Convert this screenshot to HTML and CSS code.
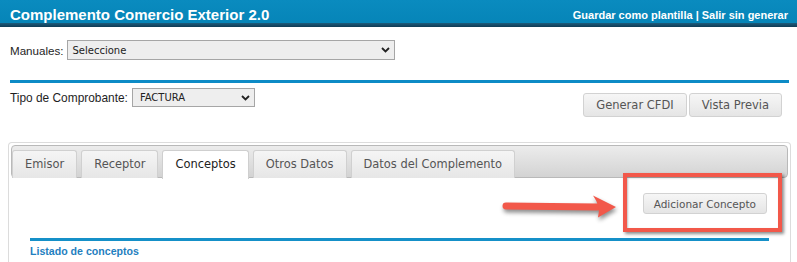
FILE: index.html
```html
<!DOCTYPE html>
<html lang="es">
<head>
<meta charset="utf-8">
<title>Complemento Comercio Exterior 2.0</title>
<link rel="stylesheet" href="styles.css">
</head>
<body>
<header class="topbar">
  <h1 class="topbar-title">Complemento Comercio Exterior 2.0</h1>
  <nav class="topbar-links"><a href="#">Guardar como plantilla</a> | <a href="#">Salir sin generar</a></nav>
</header>
<main class="page">
  <div class="field-row field-row--manuales">
    <label class="field-label">Manuales:</label>
    <div class="select select--wide">
      <span>Seleccione</span>
      <svg class="select-chevron" width="9" height="6" viewBox="0 0 9 6"><path d="M1 1l3.5 3.5L8 1" /></svg>
    </div>
  </div>
  <hr class="rule">
  <div class="toolbar">
    <div class="field-row">
      <label class="field-label field-label--wide">Tipo de Comprobante:</label>
      <div class="select select--narrow">
        <span>FACTURA</span>
        <svg class="select-chevron" width="9" height="6" viewBox="0 0 9 6"><path d="M1 1l3.5 3.5L8 1" /></svg>
      </div>
    </div>
    <div class="toolbar-actions">
      <button class="btn">Generar CFDI</button>
      <button class="btn">Vista Previa</button>
    </div>
  </div>
  <section class="tabs">
    <ul class="tab-list">
      <li class="tab">Emisor</li>
      <li class="tab">Receptor</li>
      <li class="tab tab--active">Conceptos</li>
      <li class="tab">Otros Datos</li>
      <li class="tab">Datos del Complemento</li>
    </ul>
    <div class="tab-panel">
      <div class="panel-actions">
        <button class="btn btn--small">Adicionar Concepto</button>
      </div>
      <hr class="rule rule--section">
      <h2 class="section-title">Listado de conceptos</h2>
      <div class="callout"></div>
      <svg class="callout-arrow" width="120" height="32" viewBox="0 0 120 32">
        <path class="callout-arrow-shaft" d="M6 16 L97 17" />
        <path class="callout-arrow-head" d="M93 5.5 L116 17 L98 27.5 Q101 16.5 93 5.5 Z" />
      </svg>
    </div>
  </section>
</main>
</body>
</html>
```
FILE: styles.css
```css
* { box-sizing: border-box; }

body {
  margin: 0;
  background: #fff;
  font-family: "Liberation Sans", Arial, sans-serif;
  color: #222;
  overflow: hidden;
}

.topbar {
  display: flex;
  align-items: center;
  justify-content: space-between;
  height: 27px;
  padding: 2px 9px 0 10px;
  background: linear-gradient(to bottom, #0a8bbf 0, #0685b8 84%, #1b5877 87%, #0f3b55 100%);
  color: #fff;
}

.topbar-title {
  margin: 0;
  font-size: 15px;
  font-weight: bold;
  line-height: 18px;
}

.topbar-links {
  font-size: 11px;
  font-weight: bold;
  line-height: 14px;
}

.topbar-links a {
  color: #fff;
  text-decoration: none;
}

.page {
  padding: 0 6px 0 8px;
}

.field-row {
  display: flex;
  align-items: center;
  margin-left: 2px;
}

.field-row--manuales {
  margin-top: 13px;
}

.field-label {
  font-size: 11.6px;
  color: #1e1e1e;
  margin-right: 3px;
  white-space: nowrap;
}

.field-label--wide {
  font-size: 11.9px;
  margin-right: 4px;
}

.select {
  display: flex;
  align-items: center;
  justify-content: space-between;
  height: 20px;
  padding: 0 4px 0 5px;
  background: #eeeeee;
  border: 1px solid #a6a6a6;
  font-family: "DejaVu Sans", Tahoma, sans-serif;
  font-size: 10px;
  color: #222;
}

.select--wide { width: 328px; }
.select--narrow { width: 123px; height: 19px; padding-left: 7px; }

.select-chevron path {
  fill: none;
  stroke: #222;
  stroke-width: 1.8;
}

.rule {
  margin: 20px 2px 0 2px;
  height: 3px;
  border: 0;
  background: #0d8bc6;
}

.toolbar {
  display: flex;
  justify-content: space-between;
  align-items: flex-start;
  margin-top: 5px;
}

.toolbar-actions {
  display: flex;
  gap: 2px;
  margin-top: 5px;
  margin-right: 9px;
}

.btn {
  height: 24px;
  padding: 0 12px;
  border: 1px solid #d2d2d2;
  border-radius: 3px;
  background: linear-gradient(to bottom, #f6f6f6, #e5e5e5);
  font-family: "DejaVu Sans", Tahoma, sans-serif;
  font-size: 11.5px;
  color: #555;
}

.btn--small {
  height: 21px;
  padding: 0 10px;
  font-size: 10.5px;
}

.tabs {
  margin-top: 25px;
  height: 140px;
  padding: 2px;
  border: 1px solid #dcdcdc;
  border-bottom: 0;
  border-radius: 4px 4px 0 0;
}

.tab-list {
  display: flex;
  gap: 4px;
  margin: 0;
  padding: 4px 0 0 0;
  list-style: none;
  height: 33px;
  border: 1px solid #b9b9b9;
  border-radius: 4px;
  background: linear-gradient(to bottom, #ececec 0, #d3d3d3 100%);
}

.tab {
  height: 28px;
  padding: 0 12px;
  border: 1px solid #d0d0d0;
  border-bottom: 0;
  border-radius: 3px 3px 0 0;
  background: linear-gradient(to bottom, #f5f5f5, #e6e6e6);
  font-family: "DejaVu Sans", Tahoma, sans-serif;
  font-size: 11.45px;
  line-height: 26px;
  color: #555;
  white-space: nowrap;
}

.tab--active {
  height: 29px;
  background: #fff;
  border-color: #cfcfcf;
  color: #222;
}

.tab-panel {
  position: relative;
  padding: 15px 19px 0 19px;
}

.panel-actions {
  display: flex;
  justify-content: flex-end;
  padding-right: 2px;
}

.rule--section {
  margin: 24px 0 0 0;
  background: #1590c8;
}

.section-title {
  margin: 3px 0 0 0;
  font-size: 10.6px;
  font-weight: bold;
  line-height: 14px;
  color: #1f80c0;
}

.callout {
  position: absolute;
  left: 612px;
  top: -5px;
  width: 159px;
  height: 59px;
  border: 4px solid #f2584a;
  box-shadow: 2px 2px 3px rgba(0, 0, 0, 0.45), inset 1px 1px 2px rgba(0, 0, 0, 0.25);
}

.callout-arrow {
  position: absolute;
  left: 489px;
  top: 12px;
  overflow: visible;
  filter: drop-shadow(1px 3px 2px rgba(0, 0, 0, 0.45));
}

.callout-arrow-shaft {
  fill: none;
  stroke: #f2584a;
  stroke-width: 7;
  stroke-linecap: round;
}

.callout-arrow-head {
  fill: #f2584a;
}
```
